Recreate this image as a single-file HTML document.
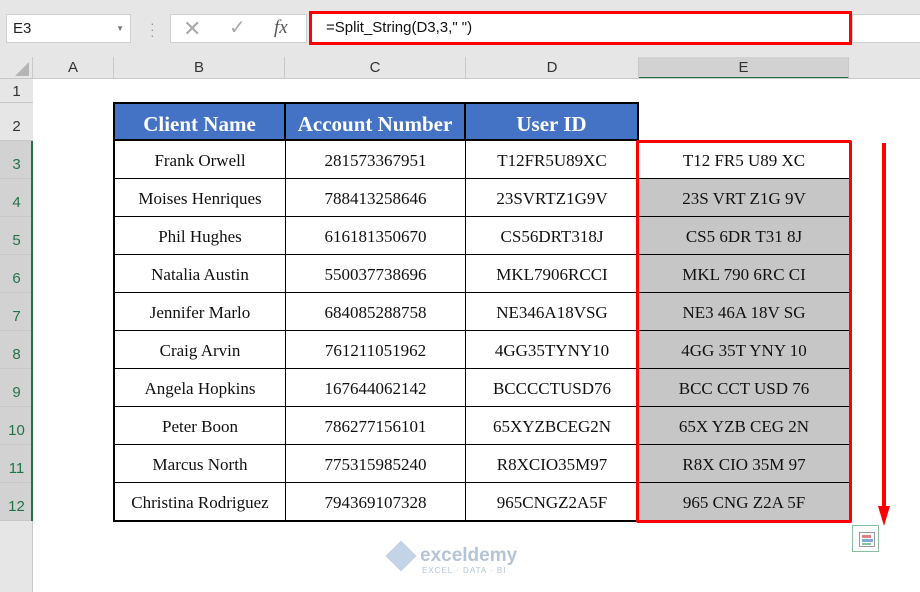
<!DOCTYPE html>
<html><head><style>
body{margin:0;width:920px;height:592px;background:#fff;position:relative;overflow:hidden;font-family:"Liberation Sans",sans-serif}
.a{position:absolute}
.ch{position:absolute;top:57px;height:22px;background:#e6e6e6;border-right:1px solid #c8c8c8;box-sizing:border-box;text-align:center;font-size:15px;line-height:22px;color:#333}
.rh{position:absolute;left:0;width:33px;background:#e6e6e6;border-bottom:1px solid #c8c8c8;box-sizing:border-box;text-align:center;font-size:15px;color:#333}
.c{position:absolute;box-sizing:border-box;text-align:center;font-family:"Liberation Serif",serif;font-size:17px;color:#111;border-right:1px solid #000;border-bottom:1px solid #000}
.hd{background:#4472c4;color:#fff;font-weight:bold;font-size:21px;border:none;border-right:2px solid #000}
</style></head><body>
<div class="a" style="left:0;top:0;width:920px;height:57px;background:#e6e6e6"></div>
<div class="a" style="left:6px;top:14px;width:125px;height:29px;background:#fff;border:1px solid #d0d0d0;box-sizing:border-box;font-size:15px;line-height:27px;padding-left:6px;color:#222">E3<span style="position:absolute;right:6px;top:0;font-size:8px;color:#777">▼</span></div>
<div class="a" style="left:150px;top:20px;color:#999;font-size:14px;line-height:6px">·<br>·<br>·</div>
<div class="a" style="left:170px;top:14px;width:137px;height:29px;background:#fff;border:1px solid #d0d0d0;box-sizing:border-box"></div>
<div class="a" style="left:183px;top:14px;font-size:22px;color:#aaa;line-height:29px">✕</div>
<div class="a" style="left:229px;top:14px;font-size:20px;color:#aaa;line-height:29px">✓</div>
<div class="a" style="left:274px;top:14px;font-family:'Liberation Serif',serif;font-style:italic;font-size:19px;color:#555;line-height:27px">fx</div>
<div class="a" style="left:309px;top:11px;width:543px;height:34px;background:#fff;border:3px solid #f00;box-sizing:border-box;font-size:15px;line-height:28px;padding-left:14px;color:#111">=Split_String(D3,3," ")</div>
<div class="a" style="left:852px;top:14px;width:68px;height:29px;background:#fff;border:1px solid #d0d0d0;border-right:none;box-sizing:border-box"></div>
<div class="ch" style="left:0;width:33px"><div class="a" style="right:3px;bottom:3px;width:0;height:0;border-left:14px solid transparent;border-bottom:14px solid #b5b5b5"></div></div>
<div class="ch" style="left:33px;width:81px">A</div>
<div class="ch" style="left:114px;width:171px">B</div>
<div class="ch" style="left:285px;width:181px">C</div>
<div class="ch" style="left:466px;width:173px">D</div>
<div class="ch" style="left:639px;width:210px;background:#d2d2d2;border-bottom:2px solid #217346">E</div>
<div class="ch" style="left:849px;width:71px;border:none"></div>
<div class="a" style="left:0;top:78px;width:920px;height:1px;background:#c8c8c8"></div>
<div class="a" style="left:0;top:79px;width:33px;height:513px;background:#e6e6e6;border-right:1px solid #c8c8c8;box-sizing:border-box"></div>
<div class="rh" style="top:79px;height:24px;line-height:26px">1</div>
<div class="rh" style="top:103px;height:38px;line-height:48px">2</div>
<div id="rows"></div>
<div class="a" style="left:31px;top:141px;width:2px;height:380px;background:#217346"></div>
<div class="a" style="left:113px;top:102px;width:526px;height:420px;border:2px solid #000;border-right:none;box-sizing:border-box"></div>
<div class="c hd" style="left:115px;top:104px;width:171px;height:37px;line-height:40px">Client Name</div>
<div class="c hd" style="left:286px;top:104px;width:180px;height:37px;line-height:40px">Account Number</div>
<div class="c hd" style="left:466px;top:104px;width:173px;height:37px;line-height:40px">User ID</div>
<div class="a" style="left:113px;top:139px;width:526px;height:2px;background:#000"></div>
<script>
var d=[["Frank Orwell","281573367951","T12FR5U89XC","T12 FR5 U89 XC"],["Moises Henriques","788413258646","23SVRTZ1G9V","23S VRT Z1G 9V"],["Phil Hughes","616181350670","CS56DRT318J","CS5 6DR T31 8J"],["Natalia Austin","550037738696","MKL7906RCCI","MKL 790 6RC CI"],["Jennifer Marlo","684085288758","NE346A18VSG","NE3 46A 18V SG"],["Craig Arvin","761211051962","4GG35TYNY10","4GG 35T YNY 10"],["Angela Hopkins","167644062142","BCCCCTUSD76","BCC CCT USD 76"],["Peter Boon","786277156101","65XYZBCEG2N","65X YZB CEG 2N"],["Marcus North","775315985240","R8XCIO35M97","R8X CIO 35M 97"],["Christina Rodriguez","794369107328","965CNGZ2A5F","965 CNG Z2A 5F"]];
var h="";for(var i=0;i<10;i++){var t=141+i*38;
h+='<div class="rh" style="top:'+t+'px;height:38px;line-height:48px;background:#d2d2d2;color:#217346">'+(i+3)+'</div>';
var xs=[[115,171],[286,180],[466,173]];for(var j=0;j<3;j++)h+='<div class="c" style="left:'+xs[j][0]+'px;top:'+t+'px;width:'+xs[j][1]+'px;height:38px;line-height:40px">'+d[i][j]+'</div>';
h+='<div class="c" style="left:639px;top:'+t+'px;width:210px;height:38px;line-height:40px;border-right:none;'+(i>0?'background:#c6c6c6':'')+'">'+d[i][3]+'</div>';}
document.getElementById("rows").outerHTML=h;
</script>
<div class="a" style="left:636px;top:140px;width:216px;height:383px;border:3px solid #f00;border-radius:2px;box-sizing:border-box"></div>
<div class="a" style="left:882px;top:143px;width:4px;height:365px;background:#f00"></div>
<div class="a" style="left:878px;top:506px;width:0;height:0;border-left:6px solid transparent;border-right:6px solid transparent;border-top:20px solid #f00"></div>
<div class="a" style="left:852px;top:525px;width:27px;height:27px;border:1px solid #8cbfa0;box-sizing:border-box;background:#fff">
<div class="a" style="left:6px;top:6px;width:14px;height:13px;border:1px solid #999"></div>
<div class="a" style="left:9px;top:9px;width:9px;height:3px;background:#e08080"></div>
<div class="a" style="left:9px;top:13px;width:11px;height:3px;background:#7fa8d8"></div>
<div class="a" style="left:9px;top:17px;width:9px;height:2px;background:#8cc0a0"></div></div>
<div class="a" style="left:390px;top:545px;width:22px;height:22px;background:#c5d3e6;transform:rotate(45deg)"></div>
<div class="a" style="left:420px;top:545px;font-size:19px;font-weight:bold;color:#b6c4d8">exceldemy</div>
<div class="a" style="left:422px;top:566px;font-size:8px;color:#b6c4d8;letter-spacing:1px">EXCEL · DATA · BI</div>
</body></html>
